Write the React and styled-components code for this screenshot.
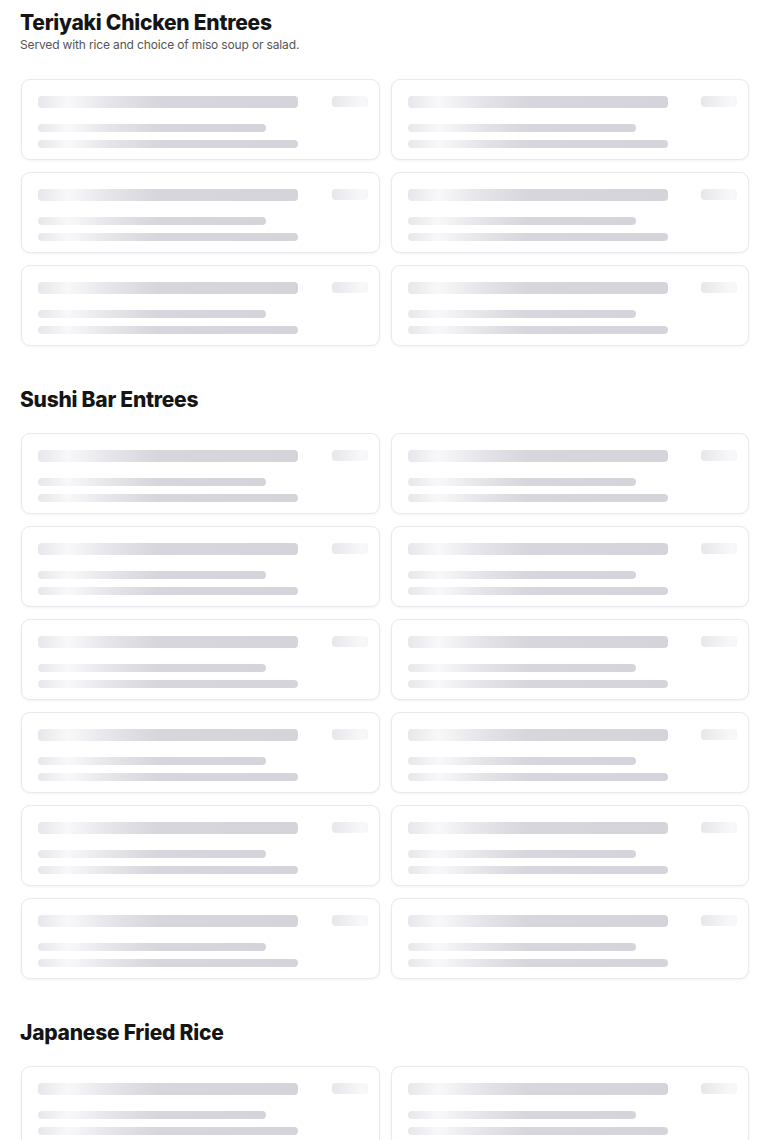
import React from "react";
import styled, { createGlobalStyle } from "styled-components";

const GlobalStyle = createGlobalStyle`
  body {
    margin: 0;
    background: #ffffff;
    font-family: Inter, "Noto Sans", sans-serif;
    color: #1a1a1a;
  }
`;

const Page = styled.div`
  padding: 9px 21px 0 20px;
`;

const Section = styled.section`
  margin-bottom: 40px;
`;

const Header = styled.header`
  margin-bottom: ${(p) => (p.$hasNote ? "26px" : "19px")};
`;

const Title = styled.h2`
  margin: 0;
  font-size: 21px;
  line-height: 28px;
  font-weight: 800;
  letter-spacing: -0.25px;
  color: #151515;
`;

const Note = styled.p`
  margin: 0;
  font-size: 12px;
  line-height: 16px;
  letter-spacing: -0.15px;
  color: #555555;
`;

const Grid = styled.div`
  display: grid;
  grid-template-columns: 1fr 1fr;
  gap: 12px 11px;
  padding-left: 1px;
`;

const Card = styled.div`
  height: 81px;
  box-sizing: border-box;
  border: 1px solid #e9e9ee;
  border-radius: 9px;
  padding: 16px 11px 11px 16px;
  background: #ffffff;
  box-shadow: 0 1px 3px rgba(20, 20, 40, 0.05);
  overflow: hidden;
`;

const TopRow = styled.div`
  display: flex;
  justify-content: space-between;
  margin-bottom: 16px;
`;

const Bar = styled.div`
  width: ${(p) => p.$w}px;
  height: ${(p) => p.$h}px;
  border-radius: 4px;
  margin-top: ${(p) => p.$mt || 0}px;
  background: linear-gradient(
    90deg,
    #e7e7eb 0px,
    #f8f8fa 30px,
    #e2e2e7 80px,
    #d6d6dc 120px,
    #d4d4da 100%
  );
`;

const SkeletonCard = () => (
  <Card>
    <TopRow>
      <Bar $w={260} $h={12} />
      <Bar $w={36} $h={11} />
    </TopRow>
    <Bar $w={228} $h={8} />
    <Bar $w={260} $h={8} $mt={8} />
  </Card>
);

const sections = [
  {
    title: "Teriyaki Chicken Entrees",
    note: "Served with rice and choice of miso soup or salad.",
    count: 6,
  },
  { title: "Sushi Bar Entrees", count: 12 },
  { title: "Japanese Fried Rice", count: 4 },
];

const App = () => {
  return (
    <>
      <GlobalStyle />
      <Page>
        {sections.map((s) => (
          <Section key={s.title}>
            <Header $hasNote={!!s.note}>
              <Title>{s.title}</Title>
              {s.note && <Note>{s.note}</Note>}
            </Header>
            <Grid>
              {Array.from({ length: s.count }).map((_, i) => (
                <SkeletonCard key={i} />
              ))}
            </Grid>
          </Section>
        ))}
      </Page>
    </>
  );
};

export default App;
